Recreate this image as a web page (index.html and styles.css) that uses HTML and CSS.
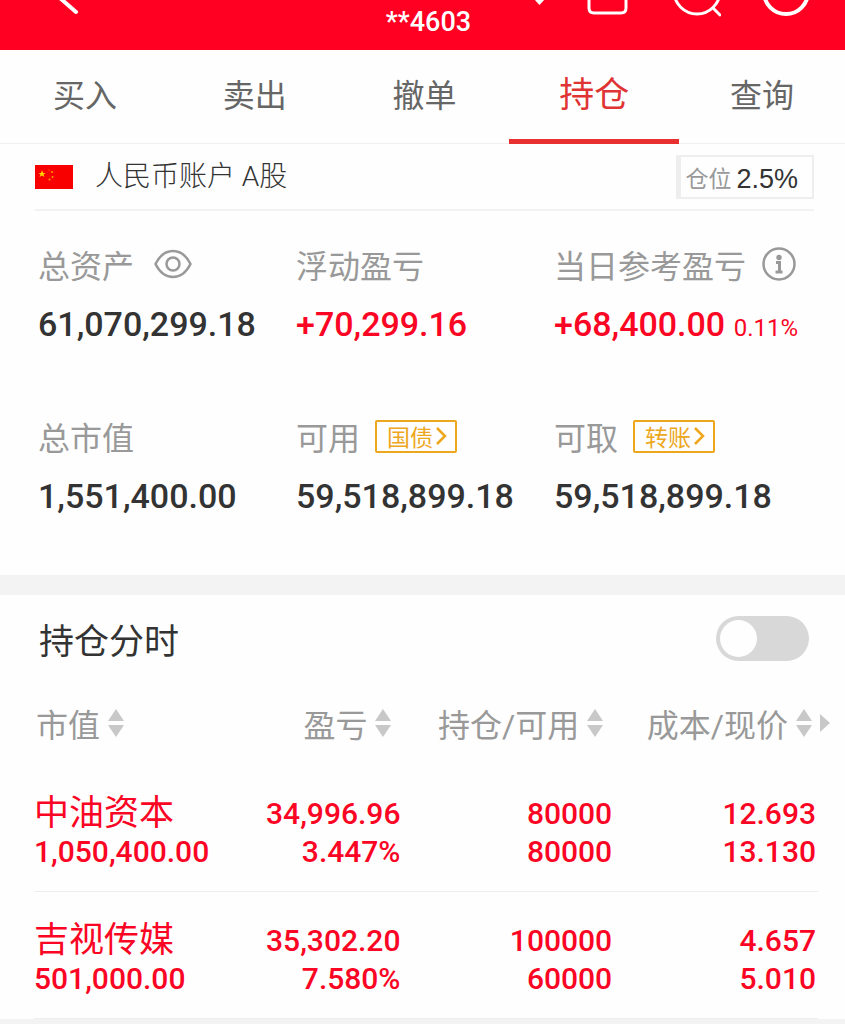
FILE: index.html
```html
<!DOCTYPE html>
<html lang="zh-CN">
<head>
<meta charset="utf-8">
<meta name="viewport" content="width=device-width, initial-scale=1">
<title>持仓</title>
<link rel="stylesheet" href="styles.css">
</head>
<body>
<header class="topbar">
  <button class="icon-btn back" type="button" aria-label="返回">
    <svg width="24" height="16" viewBox="0 0 24 16"><path d="M4 -2L20 12" fill="none" stroke="#fff" stroke-width="4" stroke-linecap="round"/></svg>
  </button>
  <div class="account-no">**4603</div>
  <div class="actions">
    <button class="icon-btn" type="button" aria-label="切换账户">
      <svg width="12" height="18" viewBox="0 0 12 18"><path d="M0 -2H13L6.500 5Z" fill="#fff"/></svg>
    </button>
    <button class="icon-btn" type="button" aria-label="消息">
      <svg width="42" height="18" viewBox="0 0 42 18"><path d="M2 -4V8Q2 13 7 13H34Q39 13 39 8V-4" fill="none" stroke="#fff" stroke-width="3"/></svg>
    </button>
    <button class="icon-btn" type="button" aria-label="搜索">
      <svg width="50" height="18" viewBox="0 0 50 18"><g fill="none" stroke="#fff" stroke-width="3" stroke-linecap="round"><circle cx="26" cy="-9" r="23"/><path d="M42 8L49 15"/></g></svg>
    </button>
    <button class="icon-btn" type="button" aria-label="刷新">
      <svg width="46" height="18" viewBox="0 0 46 18"><circle cx="23" cy="-8" r="22" fill="none" stroke="#fff" stroke-width="4"/></svg>
    </button>
  </div>
</header>

<nav class="tabs">
  <a class="tab" href="#buy">买入</a>
  <a class="tab" href="#sell">卖出</a>
  <a class="tab" href="#cancel">撤单</a>
  <a class="tab tab-active" href="#positions" aria-current="page">持仓</a>
  <a class="tab" href="#query">查询</a>
</nav>

<main>
  <section class="account">
    <svg class="flag" width="38" height="24" viewBox="0 0 38 24" aria-hidden="true">
      <rect width="38" height="24" fill="#f80000"/>
      <path d="M7 5L8 8H10.500L8.500 9.500L9.500 12L7 10.500L4.500 12L5.500 9.500L3.500 8H6Z" fill="#ffd500"/>
      <g fill="#ff9d00"><circle cx="14.500" cy="14.500" r="1"/><circle cx="17" cy="7" r="1"/><circle cx="17.500" cy="12" r="1"/><circle cx="14" cy="5" r=".6"/></g>
    </svg>
    <h1 class="account-name">人民币账户 A股</h1>
    <div class="ratio"><span class="ratio-label">仓位</span><span>2.5%</span></div>
  </section>

  <section class="summary">
    <div class="item">
      <div class="label">总资产
        <button class="icon-btn eye" type="button" aria-label="显示或隐藏金额">
          <svg width="38" height="30" viewBox="0 0 38 30"><g fill="none" stroke="#999" stroke-width="2.500"><path d="M1.500 15C6 6 12 2 19 2S32 6 36.500 15C32 24 26 28 19 28S6 24 1.500 15Z"/><circle cx="19" cy="15" r="6.500"/></g></svg>
        </button>
      </div>
      <div class="value">61,070,299.18</div>
    </div>
    <div class="item">
      <div class="label">浮动盈亏</div>
      <div class="value up">+70,299.16</div>
    </div>
    <div class="item">
      <div class="label">当日参考盈亏
        <button class="icon-btn info" type="button" aria-label="说明">
          <svg width="34" height="34" viewBox="0 0 34 34"><circle cx="17" cy="17" r="15.500" fill="none" stroke="#999" stroke-width="2.500"/><circle cx="17" cy="10.500" r="2.700" fill="#999"/><path d="M14 15.500H17.500V25M13.500 25H20.500" fill="none" stroke="#999" stroke-width="3"/></svg>
        </button>
      </div>
      <div class="value up">+68,400.00 <span class="percent">0.11%</span></div>
    </div>
    <div class="item">
      <div class="label">总市值</div>
      <div class="value">1,551,400.00</div>
    </div>
    <div class="item">
      <div class="label">可用
        <a class="chip" href="#bond">国债<svg width="12" height="18" viewBox="0 0 12 18" aria-hidden="true"><path d="M2 1L10 9L2 17" fill="none" stroke="#eda71c" stroke-width="2.500"/></svg></a>
      </div>
      <div class="value">59,518,899.18</div>
    </div>
    <div class="item">
      <div class="label">可取
        <a class="chip" href="#transfer">转账<svg width="12" height="18" viewBox="0 0 12 18" aria-hidden="true"><path d="M2 1L10 9L2 17" fill="none" stroke="#eda71c" stroke-width="2.500"/></svg></a>
      </div>
      <div class="value">59,518,899.18</div>
    </div>
  </section>

  <section class="positions">
    <div class="chart-row">
      <label for="chart-switch">持仓分时</label>
      <input class="switch" id="chart-switch" type="checkbox" role="switch">
    </div>
    <table class="holdings">
      <colgroup><col class="c1"><col class="c2"><col class="c3"><col class="c4"></colgroup>
      <thead>
        <tr>
          <th scope="col"><button class="sort" type="button">市值<svg width="16" height="28" viewBox="0 0 16 28" aria-hidden="true"><path d="M8 0L16 12H0ZM0 16H16L8 28Z" fill="#c8c8c8"/></svg></button></th>
          <th scope="col"><button class="sort" type="button">盈亏<svg width="16" height="28" viewBox="0 0 16 28" aria-hidden="true"><path d="M8 0L16 12H0ZM0 16H16L8 28Z" fill="#c8c8c8"/></svg></button></th>
          <th scope="col"><button class="sort" type="button">持仓/可用<svg width="16" height="28" viewBox="0 0 16 28" aria-hidden="true"><path d="M8 0L16 12H0ZM0 16H16L8 28Z" fill="#c8c8c8"/></svg></button></th>
          <th scope="col"><button class="sort sort-more" type="button">成本/现价<svg width="16" height="28" viewBox="0 0 16 28" aria-hidden="true"><path d="M8 0L16 12H0ZM0 16H16L8 28Z" fill="#c8c8c8"/></svg><svg width="10" height="18" viewBox="0 0 10 18" aria-hidden="true"><path d="M0 0L10 9L0 18Z" fill="#c8c8c8"/></svg></button></th>
        </tr>
      </thead>
      <tbody>
        <tr>
          <td><div class="stock">中油资本</div><div>1,050,400.00</div></td>
          <td><div>34,996.96</div><div>3.447%</div></td>
          <td><div>80000</div><div>80000</div></td>
          <td><div>12.693</div><div>13.130</div></td>
        </tr>
        <tr>
          <td><div class="stock">吉视传媒</div><div>501,000.00</div></td>
          <td><div>35,302.20</div><div>7.580%</div></td>
          <td><div>100000</div><div>60000</div></td>
          <td><div>4.657</div><div>5.010</div></td>
        </tr>
      </tbody>
    </table>
  </section>
</main>
</body>
</html>
```
FILE: styles.css
```css
* { box-sizing: border-box; }

body {
  margin: 0;
  background: #f3f3f3;
  color: #333;
  font-family: Roboto, "Noto Sans CJK SC", sans-serif;
}

button {
  padding: 0;
  border: 0;
  background: none;
  color: inherit;
  font: inherit;
}

a { color: inherit; text-decoration: none; }
svg { display: block; flex: none; }
.icon-btn { display: block; flex: none; }

/* Top bar */
.topbar {
  display: grid;
  grid-template-columns: 1fr auto 1fr;
  align-items: start;
  height: 50px;
  padding: 0 36px 0 48px;
  background: #ff0022;
  color: #fff;
}

.back { margin-left: 8px; }

.account-no {
  padding-top: 6px;
  font-size: 27px;
  font-weight: 500;
  line-height: 32px;
}

.actions { display: flex; justify-content: flex-end; gap: 42px; }

/* Tabs */
.tabs {
  display: grid;
  grid-template-columns: repeat(4, 170fr) 166fr;
  height: 94px;
  border-bottom: 1px solid #f0f0f0;
  background: #fefefe;
}

.tab {
  height: 94px;
  border-bottom: 5px solid transparent;
  color: #666;
  font-size: 32px;
  line-height: 92px;
  text-align: center;
}

.tab-active { border-color: #e93030; color: #e03434; font-size: 35px; }

/* Account */
main { background: #fefefe; }

.account {
  display: flex;
  align-items: center;
  height: 67px;
  margin: 0 31px 0 35px;
  border-bottom: 2px solid #f2f2f2;
}

.account-name {
  flex: 1;
  margin: 0 0 0 22px;
  font-size: 28px;
  font-weight: 300;
  line-height: 40px;
}

.ratio {
  display: flex;
  align-items: center;
  gap: 5px;
  height: 44px;
  padding: 4px 14px 0 4px;
  border: 2px solid #eee;
  border-left-width: 5px;
  font-family: "Liberation Sans", "Noto Sans CJK SC", sans-serif;
  font-size: 27px;
  line-height: 36px;
}

.ratio-label { color: #999; font-size: 23px; }

/* Summary */
.summary {
  display: grid;
  grid-template-columns: 258fr 258fr 291fr;
  row-gap: 66px;
  padding: 30px 0 56px 38px;
  border-bottom: 20px solid #f3f3f3;
}

.label {
  display: flex;
  align-items: center;
  height: 46px;
  color: #999;
  font-size: 32px;
  white-space: nowrap;
}

.eye { margin-left: 20px; }
.info { margin-left: 16px; }

.value {
  margin-top: 14px;
  font-size: 34px;
  font-weight: 500;
  line-height: 46px;
  white-space: nowrap;
}

.percent { font-size: 24px; font-weight: 400; line-height: 1; }
.up { color: #fa0524; }

.chip {
  display: flex;
  align-items: center;
  gap: 2px;
  height: 33px;
  margin-left: 15px;
  padding: 0 8px 0 10px;
  border: 2px solid #eda71c;
  border-radius: 2px;
  color: #eda71c;
  font-size: 23px;
}

/* Positions */
.chart-row {
  display: flex;
  align-items: center;
  justify-content: space-between;
  height: 86px;
  padding: 0 36px 0 39px;
  font-size: 35px;
}

.switch {
  appearance: none;
  width: 93px;
  height: 45px;
  margin: 0;
  padding: 4px;
  border-radius: 23px;
  background: #d8d8d8;
}

.switch::before {
  content: "";
  display: block;
  width: 37px;
  height: 37px;
  border-radius: 50%;
  background: #fefefe;
}

.switch:checked { background: #e93030; }
.switch:checked::before { margin-left: auto; }

.holdings {
  width: calc(100% - 61px);
  margin: 0 27px 0 34px;
  border-collapse: collapse;
  table-layout: fixed;
}

.c1 { width: 22%; }
.c2 { width: 25%; }
.c3 { width: 27%; }
.c4 { width: 26%; }

th {
  height: 84px;
  padding: 0 11px 0 2px;
  color: #999;
  font-size: 32px;
  font-weight: 400;
}

.sort {
  display: flex;
  align-items: center;
  gap: 8px;
  margin-left: auto;
  white-space: nowrap;
}

th:first-child .sort { margin-left: 0; }
th:last-child { padding-right: 0; }
.sort-more { margin-right: -12px; float: right; }

td {
  padding: 30px 2px 20px 0;
  border-bottom: 1px solid #eee;
  color: #fa0524;
  font-size: 30px;
  font-weight: 500;
  line-height: 38px;
  text-align: right;
  vertical-align: top;
}

td:first-child { text-align: left; }
.stock { font-size: 35px; font-weight: 400; }
```
